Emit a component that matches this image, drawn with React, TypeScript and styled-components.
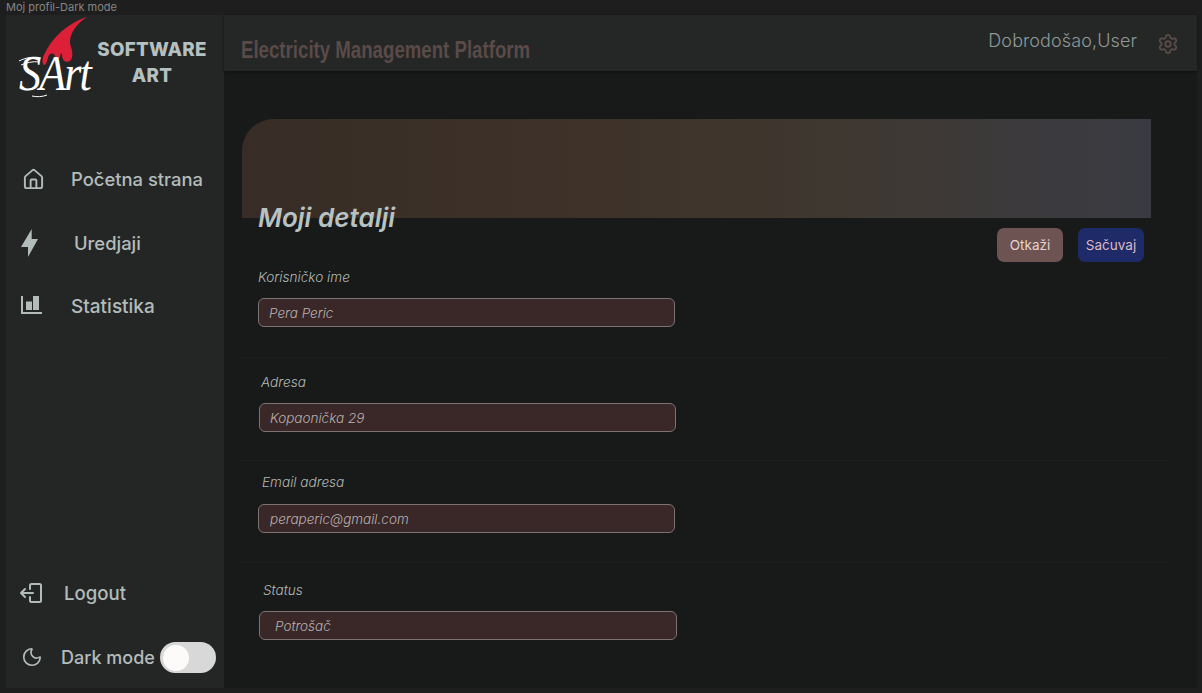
import React from "react";
import styled, { createGlobalStyle } from "styled-components";
import { Home, Settings, Moon } from "lucide-react";

const Global = createGlobalStyle`
  html, body { margin: 0; padding: 0; background: #1e1e1e; }
  body { font-family: "Inter", "Liberation Sans", sans-serif; overflow: hidden; }
`;

const Page = styled.div`
  width: 1202px;
  height: 693px;
  background: #1e1e1e;
  display: flex;
  flex-direction: column;
`;
const FrameLabel = styled.div`
  height: 15px;
  padding: 1px 0 0 6px;
  box-sizing: border-box;
  font-size: 11px;
  line-height: 12px;
  color: #858585;
`;
const Frame = styled.div`
  width: 1191px;
  height: 673px;
  margin-left: 6px;
  display: grid;
  grid-template-columns: 218px 1fr;
  background: #181a19;
`;
const Sidebar = styled.aside`
  background: #242626;
  display: flex;
  flex-direction: column;
  color: #b2bcbb;
`;
const LogoRow = styled.div`
  height: 110px;
  display: flex;
  align-items: flex-start;
`;
const LogoMark = styled.div`
  position: relative;
  width: 90px;
  height: 90px;
  flex: none;
`;
const LogoArt = styled.span`
  position: absolute;
  left: 13px;
  top: 38px;
  font-family: "Liberation Serif", serif;
  font-style: italic;
  font-size: 46px;
  line-height: 46px;
  letter-spacing: -2px;
  color: #fff;
  transform-origin: left bottom;
  transform: scale(0.96, 1.08);
`;
const LogoText = styled.div`
  margin: 22px 0 0 0;
  width: 112px;
  text-align: center;
  font-size: 18.8px;
  line-height: 26px;
  font-weight: 800;
  letter-spacing: 0.25px;
  color: #b5c0c0;
`;
const Nav = styled.nav`
  margin-top: 38px;
  display: flex;
  flex-direction: column;
  gap: 31.5px;
`;
const NavItem = styled.div<{ $gap: number; $left: number; $size?: number }>`
  height: 32px;
  display: flex;
  align-items: center;
  padding-left: ${(p) => p.$left}px;
  gap: ${(p) => p.$gap}px;
  font-size: ${(p) => p.$size ?? 18.4}px;
  font-weight: 500;
  white-space: nowrap;
`;
const Spacer = styled.div`
  flex: 1;
`;
const Bottom = styled.div`
  display: flex;
  flex-direction: column;
  gap: 32px;
  padding-bottom: 15px;
`;
const Switch = styled.div`
  width: 56px;
  height: 31px;
  border-radius: 16px;
  background: #d8d8d8;
  margin-left: -13px;
  padding: 3px 0 0 3px;
  box-sizing: border-box;
  flex: none;
`;
const Knob = styled.div`
  width: 26px;
  height: 26px;
  border-radius: 50%;
  background: #fdfbfa;
`;
const Content = styled.div`
  display: flex;
  flex-direction: column;
  min-width: 0;
`;
const Header = styled.header`
  height: 56px;
  background: #242726;
  display: flex;
  align-items: flex-start;
  box-shadow: 0 1px 3px rgba(0, 0, 0, 0.45);
  padding: 0 18px 0 17px;
`;
const Title = styled.h1`
  margin: 20px 0 0;
  width: 289px;
  font-family: "Liberation Sans", sans-serif;
  font-size: 24px;
  line-height: 30px;
  font-weight: 700;
  color: #5a4a48;
  white-space: nowrap;
  transform-origin: left center;
  transform: scaleX(0.777);
`;
const Welcome = styled.div`
  margin: 14px 0 0 auto;
  font-size: 18px;
  line-height: 24px;
  font-weight: 300;
  letter-spacing: 0.1px;
  color: #8f9999;
`;
const GearSlot = styled.div`
  margin: 18px 0 0 20px;
  color: #5a4a48;
  height: 24px;
`;
const Main = styled.main`
  padding: 48px 0 0 18px;
  flex: 1;
`;
const Banner = styled.div`
  width: 909px;
  height: 99px;
  border-radius: 32px 0 0 0;
  background: linear-gradient(90deg, #382d26 0%, #3e3229 40%, #3f3830 65%, #3b3a3e 90%, #3a3b42 100%);
`;
const TitleRow = styled.div`
  margin-top: -15px;
  height: 59px;
  display: flex;
  padding-left: 16px;
`;
const PageTitle = styled.h2`
  margin: 0;
  font-size: 26px;
  line-height: 29px;
  font-weight: 600;
  font-style: italic;
  color: #b7c2c2;
`;
const Actions = styled.div`
  margin-left: auto;
  margin-right: 53px;
  align-self: flex-end;
  display: flex;
  gap: 15px;
`;
const ActionButton = styled.button<{ $bg: string; $fg: string }>`
  width: 66px;
  height: 34px;
  border: 0;
  border-radius: 7px;
  padding: 0;
  font: 400 13.5px "Inter", "Liberation Sans", sans-serif;
  background: ${(p) => p.$bg};
  color: ${(p) => p.$fg};
`;
const Field = styled.section<{ $top: number; $bottom: number; $divider?: boolean }>`
  width: 928px;
  margin-left: -2px;
  padding: ${(p) => p.$top}px 0 ${(p) => p.$bottom}px 2px;
  box-sizing: border-box;
  border-bottom: 1px solid ${(p) => (p.$divider ? "#1d1f1e" : "transparent")};
`;
const FieldLabel = styled.div<{ $x: number; $gap: number }>`
  padding-left: ${(p) => p.$x}px;
  margin-bottom: ${(p) => p.$gap}px;
  font-size: 13.6px;
  line-height: 16px;
  font-style: italic;
  font-weight: 300;
  color: #b3b9b8;
`;
const FieldValue = styled.div<{ $x: number; $w: number; $pad: number }>`
  margin-left: ${(p) => p.$x}px;
  width: ${(p) => p.$w}px;
  height: 29px;
  box-sizing: border-box;
  border: 1px solid #7a7371;
  border-radius: 6px;
  background: #3a2727;
  padding-left: ${(p) => p.$pad}px;
  font-size: 13.5px;
  line-height: 28px;
  font-style: italic;
  font-weight: 300;
  color: #b9b2b0;
`;

const fields = [
  { label: "Korisničko ime", value: "Pera Peric", top: 7, bottom: 30, lx: 16, gap: 13, x: 16, w: 417, pad: 10, divider: true },
  { label: "Adresa", value: "Kopaonička 29", top: 16, bottom: 28, lx: 19, gap: 13, x: 17, w: 417, pad: 10, divider: true },
  { label: "Email adresa", value: "peraperic@gmail.com", top: 13, bottom: 29, lx: 20, gap: 14, x: 16, w: 417, pad: 11, divider: true },
  { label: "Status", value: "Potrošač", top: 19, bottom: 0, lx: 21, gap: 13, x: 17, w: 418, pad: 15, divider: false },
];

const BoltIcon = () => (
  <svg width="20" height="30" viewBox="0 0 20 30" fill="currentColor">
    <path d="M11.700 1 1 19h7v10l10-18h-6.300z" />
  </svg>
);
const ChartIcon = () => (
  <svg width="22" height="20" viewBox="0 0 22 20" fill="currentColor">
    <path d="M1 0h2v16h19v2H1z" />
    <rect x="6" y="5.500" width="6" height="8.500" />
    <rect x="13" y="0" width="6" height="14" />
  </svg>
);
const LogoutIcon = () => (
  <svg width="24" height="24" viewBox="0 0 24 24" fill="none" stroke="currentColor" strokeWidth="2" strokeLinecap="round" strokeLinejoin="round">
    <path d="M11 8V4.500A1.500 1.500 0 0 1 12.500 3h8A1.500 1.500 0 0 1 22 4.500v15a1.500 1.500 0 0 1-1.500 1.500h-8a1.500 1.500 0 0 1-1.500-1.500V16" />
    <path d="M2 12h12M6 8l-4 4 4 4" />
  </svg>
);
const LogoGlyph = () => (
  <svg width="90" height="90" viewBox="0 0 90 90">
    <path fill="#dc2038" d="M81 2C62 8 46 22 38 40c-2 4-2 8 0 10 3 0 3-6 5-10 3-2 5-2 6 1 1 4 3 5 5 1 1-4 1-6 2-2 0 6 4 8 8 6 3-3 3-8 1-14-3-8 1-20 16-30z" />
    <path fill="none" stroke="#fff" strokeWidth="1" d="M13 46c6-3 14-5 22-3M15 50c5-2 12-4 18-3M26 81c5 1 10 1 15-1" />
  </svg>
);

export default function App() {
  return (
    <Page>
      <Global />
      <FrameLabel>Moj profil-Dark mode</FrameLabel>
      <Frame>
        <Sidebar>
          <LogoRow>
            <LogoMark>
              <LogoGlyph />
              <LogoArt>SArt</LogoArt>
            </LogoMark>
            <LogoText>
              SOFTWARE
              <br />
              ART
            </LogoText>
          </LogoRow>
          <Nav>
            <NavItem $left={16} $gap={26}>
              <Home size={23} strokeWidth={2} />
              Početna strana
            </NavItem>
            <NavItem $left={14} $gap={34}>
              <BoltIcon />
              Uredjaji
            </NavItem>
            <NavItem $left={14} $gap={29} $size={19}>
              <ChartIcon />
              Statistika
            </NavItem>
          </Nav>
          <Spacer />
          <Bottom>
            <NavItem $left={13} $gap={21} $size={18.6}>
              <LogoutIcon />
              Logout
            </NavItem>
            <NavItem $left={15} $gap={18} $size={18}>
              <Moon size={22} strokeWidth={1.8} />
              <span>Dark mode</span>
              <Switch>
                <Knob />
              </Switch>
            </NavItem>
          </Bottom>
        </Sidebar>
        <Content>
          <Header>
            <Title>Electricity Management Platform</Title>
            <Welcome>Dobrodošao,User</Welcome>
            <GearSlot>
              <Settings size={22} strokeWidth={2} />
            </GearSlot>
          </Header>
          <Main>
            <Banner />
            <TitleRow>
              <PageTitle>Moji detalji</PageTitle>
              <Actions>
                <ActionButton $bg="#6d5452" $fg="#e6d2d0">Otkaži</ActionButton>
                <ActionButton $bg="#1f2a68" $fg="#dcb9c2">Sačuvaj</ActionButton>
              </Actions>
            </TitleRow>
            {fields.map((f) => (
              <Field key={f.label} $top={f.top} $bottom={f.bottom} $divider={f.divider}>
                <FieldLabel $x={f.lx} $gap={f.gap}>{f.label}</FieldLabel>
                <FieldValue $x={f.x} $w={f.w} $pad={f.pad}>{f.value}</FieldValue>
              </Field>
            ))}
          </Main>
        </Content>
      </Frame>
    </Page>
  );
}
